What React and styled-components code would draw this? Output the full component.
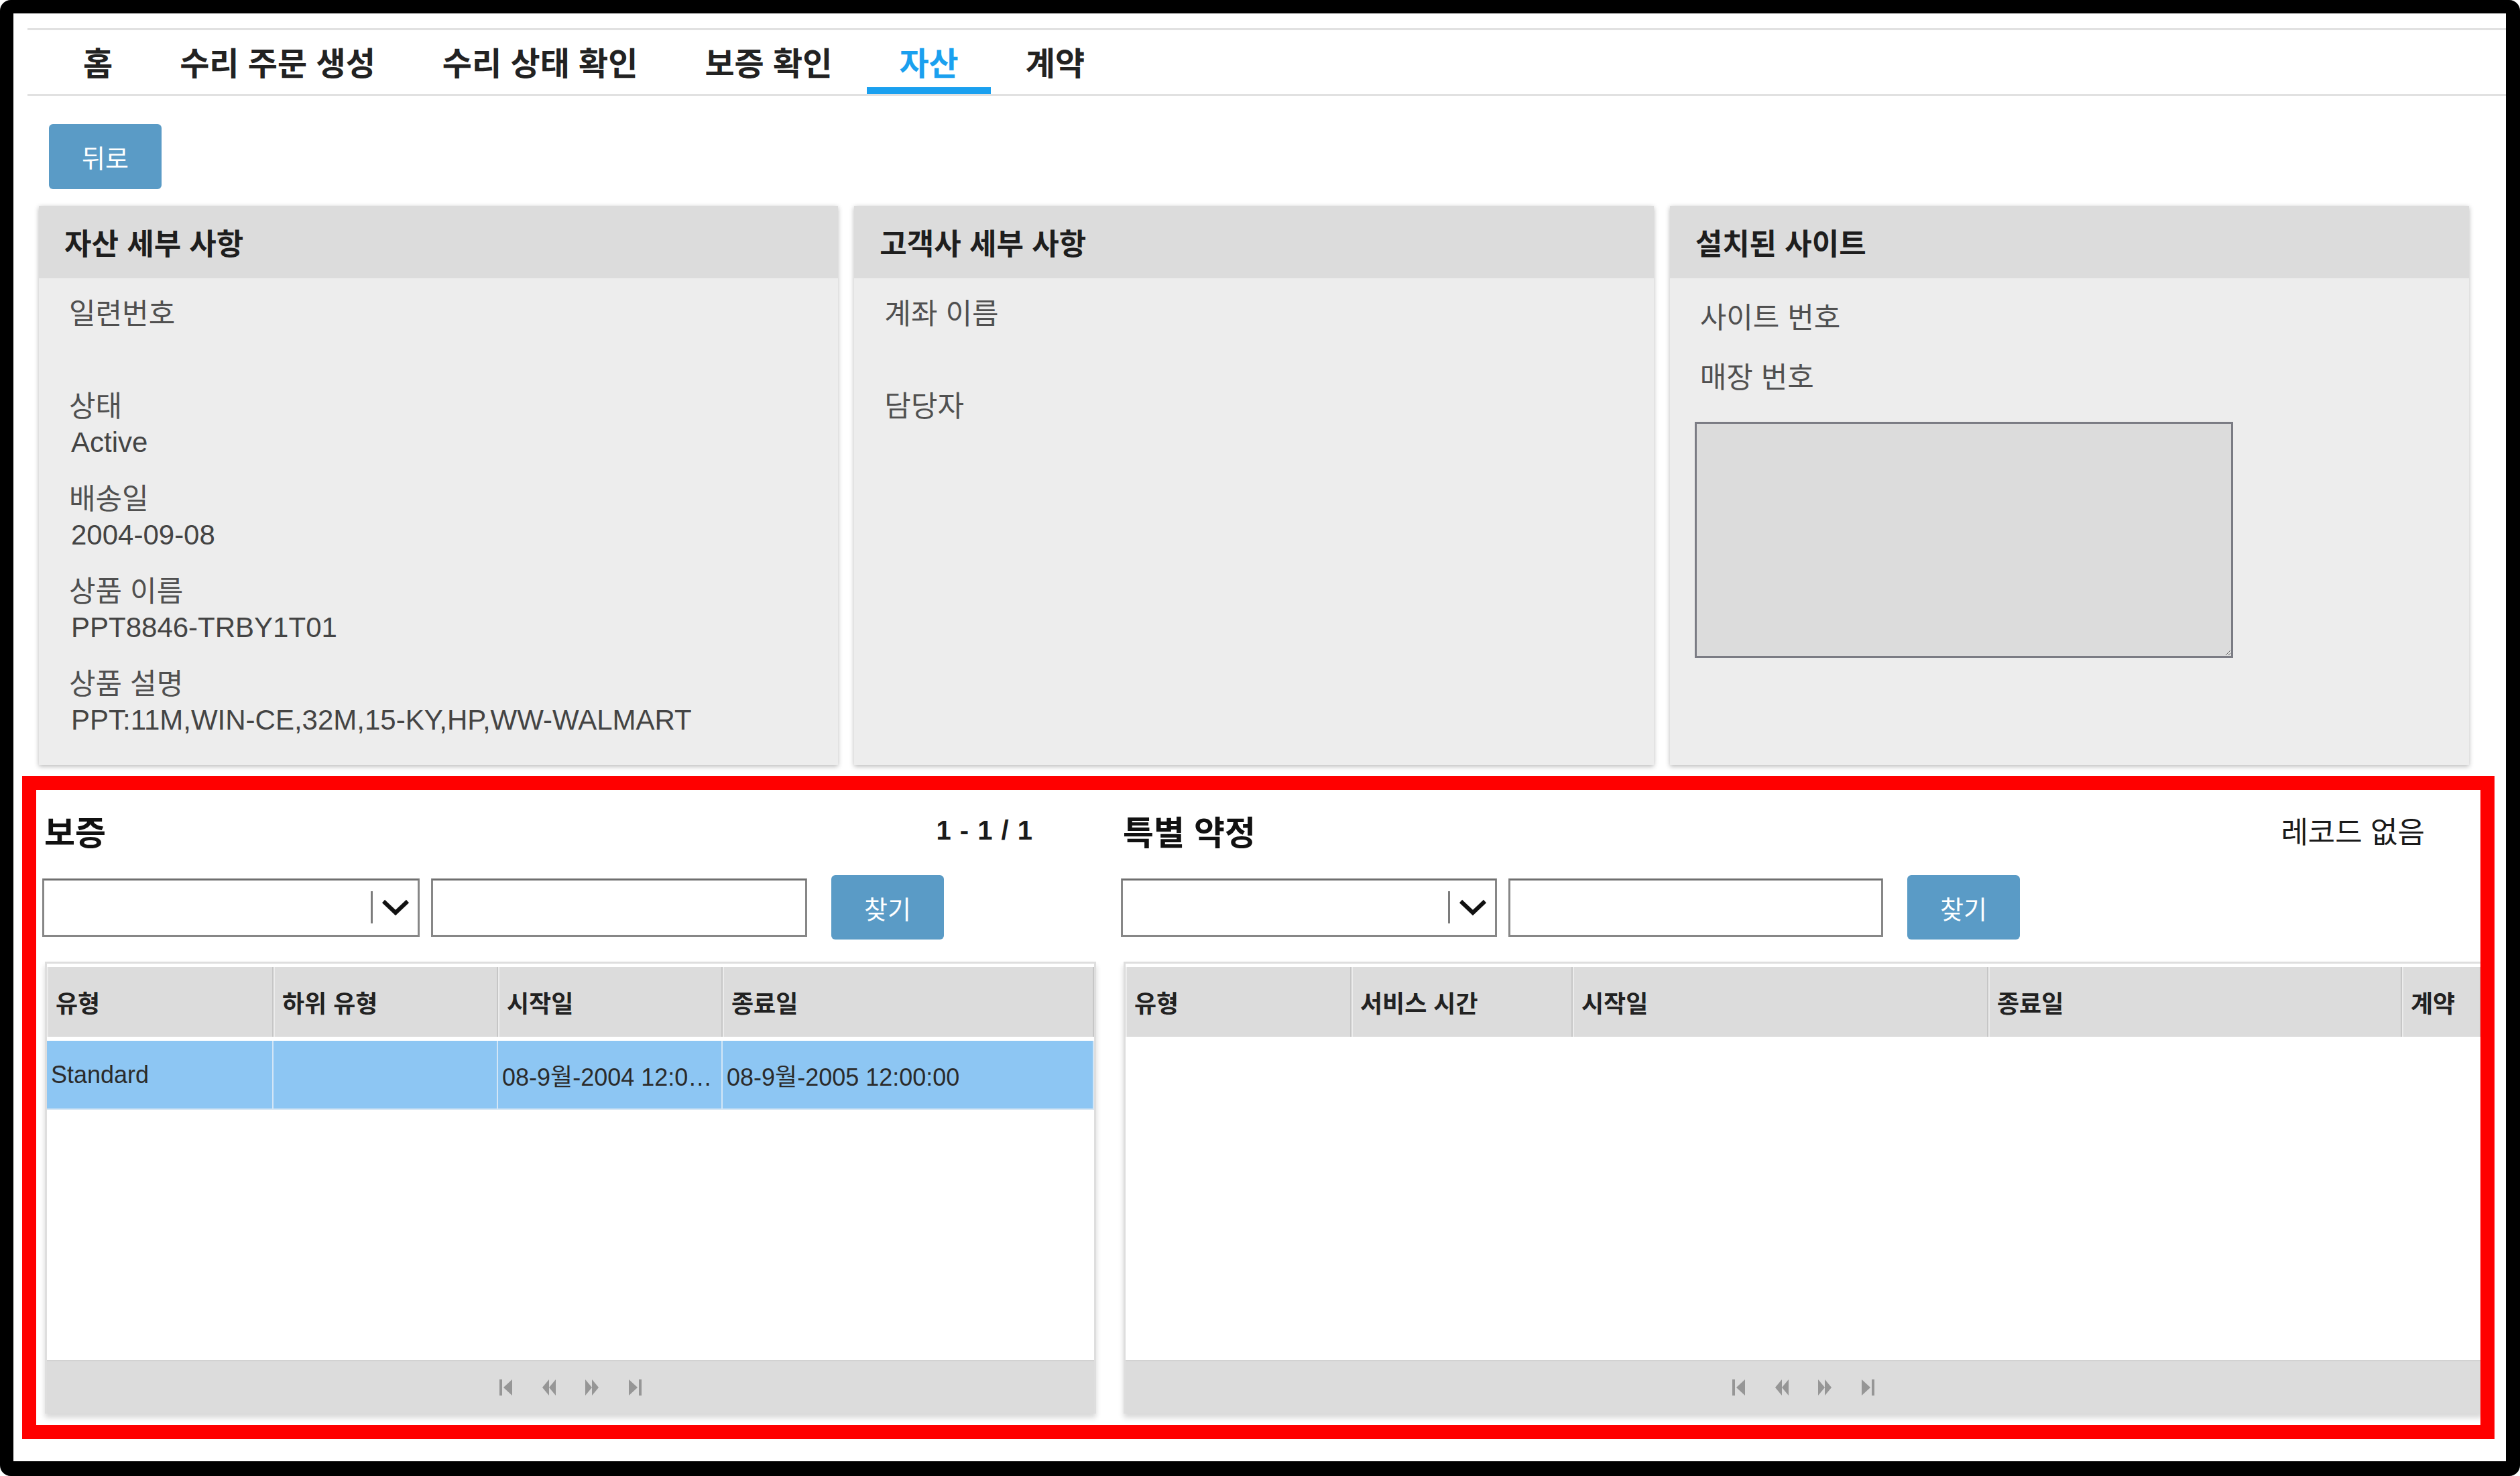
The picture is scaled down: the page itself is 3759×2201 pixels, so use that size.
import React from "react";
import styled, { createGlobalStyle } from "styled-components";

const GlobalStyle = createGlobalStyle`
  html, body {
    margin: 0;
    padding: 0;
    background: #fff;
  }
  body {
    font-family: "Liberation Sans", "Noto Sans CJK KR", sans-serif;
  }
  * {
    box-sizing: border-box;
  }
`;

const Frame = styled.div`
  position: relative;
  width: 3759px;
  height: 2201px;
  border: solid #000;
  border-width: 20px 21px 22px 20px;
  border-radius: 16px;
  background: #fff;
  overflow: hidden;
`;

const TabBar = styled.nav`
  display: flex;
  height: 101px;
  margin: 22px 0 0 21px;
  padding-left: 33px;
  border-top: 3px solid #e1e1e1;
  border-bottom: 3px solid #e1e1e1;
`;

const Tab = styled.div`
  position: relative;
  display: flex;
  align-items: center;
  padding: 0 50px 4px;
  font-size: 48px;
  font-weight: 700;
  color: ${(p) => (p.$active ? "#1aa0ef" : "#222")};
  &::after {
    content: "";
    display: ${(p) => (p.$active ? "block" : "none")};
    position: absolute;
    left: 2px;
    right: 2px;
    bottom: 0;
    height: 10px;
    background: #1aa0ef;
  }
`;

const Content = styled.main`
  padding: 0 55px 0 38px;
`;

const BlueButton = styled.button`
  display: flex;
  align-items: center;
  justify-content: center;
  width: ${(p) => p.$w || 168}px;
  height: ${(p) => p.$h || 96}px;
  padding: 0;
  border: 0;
  border-radius: 6px;
  background: #5a9bc6;
  color: #fff;
  font-family: inherit;
  font-size: 38px;
  flex-shrink: 0;
`;

const BackRow = styled.div`
  margin: 42px 0 0 15px;
`;

const CardRow = styled.section`
  display: grid;
  grid-template-columns: repeat(3, 1fr);
  gap: 24px;
  height: 834px;
  margin-top: 25px;
`;

const Card = styled.div`
  display: flex;
  flex-direction: column;
  background: #ededed;
  box-shadow: 0 2px 7px rgba(0, 0, 0, 0.28);
`;

const CardHeader = styled.div`
  display: flex;
  align-items: center;
  height: 108px;
  padding-left: 38px;
  background: #dcdcdc;
  color: #1e1e1e;
  font-size: 44px;
  font-weight: 700;
`;

const CardBody = styled.div`
  padding: ${(p) => p.$top || 26}px 0 0 45px;
`;

const Field = styled.div`
  margin-bottom: ${(p) => p.$gap ?? 30}px;
`;

const Label = styled.div`
  height: 54px;
  line-height: 54px;
  font-size: 43px;
  color: #505050;
`;

const Value = styled.div`
  height: 54px;
  line-height: 54px;
  padding-left: 3px;
  font-size: 42px;
  color: #444;
  white-space: nowrap;
`;

const SiteNotes = styled.textarea`
  display: block;
  width: 803px;
  height: 352px;
  margin-left: -8px;
  border: 3px solid #7b7c84;
  background: #dcdcdc;
  resize: both;
  outline: none;
`;

const Lower = styled.section`
  display: flex;
  gap: 37px;
  margin: 57px -21px 0 5px;
`;

const Panel = styled.div`
  display: flex;
  flex-direction: column;
  flex: ${(p) => (p.$width ? `0 0 ${p.$width}px` : "1")};
  min-width: 0;
`;

const TitleRow = styled.div`
  display: flex;
  align-items: center;
  justify-content: space-between;
  height: 80px;
  padding: 0 ${(p) => p.$right}px 0 3px;
`;

const PanelTitle = styled.h2`
  margin: 0;
  font-size: 50px;
  font-weight: 700;
  color: #111;
`;

const Counter = styled.span`
  font-size: ${(p) => (p.$bold ? 40 : 44)}px;
  font-weight: ${(p) => (p.$bold ? 700 : 400)};
  color: #1a1a1a;
  word-spacing: ${(p) => (p.$bold ? "2px" : "0")};
`;

const Toolbar = styled.div`
  display: flex;
  align-items: center;
  height: 96px;
  margin-top: 27px;
`;

const SelectBox = styled.div`
  display: flex;
  align-items: center;
  justify-content: flex-end;
  width: ${(p) => p.$w}px;
  height: 87px;
  padding-right: 11px;
  border: 3px solid #878787;
  border-top-color: #6f6f6f;
  background: #fff;
  flex-shrink: 0;
`;

const SelectDivider = styled.span`
  width: 3px;
  height: 48px;
  margin-right: 12px;
  background: #7c7c7c;
`;

const SearchInput = styled.input`
  width: ${(p) => p.$w}px;
  height: 87px;
  margin: 0 36px 0 17px;
  border: 3px solid #878787;
  border-top-color: #6f6f6f;
  outline: none;
  flex-shrink: 0;
`;

const Grid = styled.div`
  display: flex;
  flex-direction: column;
  height: 674px;
  margin: 33px 0 0 4px;
  border: 3px solid #dedede;
  border-bottom: 0;
  background: #fff;
  box-shadow: 0 6px 8px rgba(0, 0, 0, 0.16);
`;

const GridRow = styled.div`
  display: grid;
  grid-template-columns: ${(p) => p.$cols};
  height: ${(p) => p.$h}px;
  margin-top: ${(p) => p.$mt || 0}px;
  background: ${(p) => p.$bg};
  border-bottom: ${(p) => (p.$line ? "2px solid #d8e7f3" : "0")};
`;

const HeadCell = styled.div`
  display: flex;
  align-items: center;
  padding-left: 11px;
  border-right: 2px solid #c6c6c6;
  border-left: 2px solid #ececec;
  font-size: 36px;
  font-weight: 700;
  color: #222;
  white-space: nowrap;
  overflow: hidden;
`;

const DataCell = styled.div`
  display: flex;
  align-items: center;
  padding: 0 4px 0 6px;
  border-right: 2px solid #d3e6f6;
  font-size: 36px;
  color: #2b2b2b;
  min-width: 0;
  span {
    white-space: nowrap;
    overflow: hidden;
    text-overflow: ellipsis;
  }
`;

const GridBody = styled.div`
  flex: 1;
`;

const Pager = styled.div`
  display: flex;
  align-items: center;
  justify-content: center;
  gap: 42px;
  height: 80px;
  background: #dcdcdc;
  border-top: 2px solid #d2d2d2;
  color: #8a8a8a;
`;

const Highlight = styled.div`
  position: absolute;
  top: 1137px;
  left: 13px;
  width: 3688px;
  height: 989px;
  border: 21px solid #ff0000;
  pointer-events: none;
`;

const Chevron = () => (
  <svg width="44" height="28" viewBox="0 0 44 28">
    <path d="M4 5 L22 22 L40 5" fill="none" stroke="#111" strokeWidth="6" />
  </svg>
);

// first / prev / next / last arrows of the grid pager
const PagerIcon = ({ kind }) => {
  const shapes = {
    first: (
      <>
        <rect x="1" y="0" width="4" height="24" />
        <polygon points="20,0 7,12 20,24" />
      </>
    ),
    prev: (
      <>
        <polygon points="11,0 1,12 11,24" />
        <polygon points="21,0 11,12 21,24" />
      </>
    ),
    next: (
      <>
        <polygon points="1,0 11,12 1,24" />
        <polygon points="11,0 21,12 11,24" />
      </>
    ),
    last: (
      <>
        <polygon points="2,0 15,12 2,24" />
        <rect x="17" y="0" width="4" height="24" />
      </>
    ),
  };
  return (
    <svg width="22" height="24" viewBox="0 0 22 24" fill="currentColor" opacity="0.85">
      {shapes[kind]}
    </svg>
  );
};

const tabs = ["홈", "수리 주문 생성", "수리 상태 확인", "보증 확인", "자산", "계약"];

const assetFields = [
  { label: "일련번호", value: "" },
  { label: "상태", value: "Active" },
  { label: "배송일", value: "2004-09-08" },
  { label: "상품 이름", value: "PPT8846-TRBY1T01" },
  { label: "상품 설명", value: "PPT:11M,WIN-CE,32M,15-KY,HP,WW-WALMART" },
];

const customerFields = [
  { label: "계좌 이름", value: "" },
  { label: "담당자", value: "" },
];

const warranty = {
  title: "보증",
  count: "1 - 1 / 1",
  cols: "338px 335px 335px 1fr",
  headers: ["유형", "하위 유형", "시작일", "종료일"],
  rows: [["Standard", "", "08-9월-2004 12:00:00", "08-9월-2005 12:00:00"]],
};

const agreements = {
  title: "특별 약정",
  count: "레코드 없음",
  cols: "337px 330px 620px 617px 1fr",
  headers: ["유형", "서비스 시간", "시작일", "종료일", "계약"],
  rows: [],
};

const DataPanel = ({ data, width, selectW, inputW, right, boldCount }) => (
  <Panel $width={width}>
    <TitleRow $right={right}>
      <PanelTitle>{data.title}</PanelTitle>
      <Counter $bold={boldCount}>{data.count}</Counter>
    </TitleRow>
    <Toolbar>
      <SelectBox $w={selectW}>
        <SelectDivider />
        <Chevron />
      </SelectBox>
      <SearchInput $w={inputW} />
      <BlueButton>찾기</BlueButton>
    </Toolbar>
    <Grid>
      <GridRow $cols={data.cols} $h={104} $mt={5} $bg="#dcdcdc">
        {data.headers.map((h) => (
          <HeadCell key={h}>{h}</HeadCell>
        ))}
      </GridRow>
      <GridBody>
        {data.rows.map((row, i) => (
          <GridRow key={i} $cols={data.cols} $h={103} $mt={6} $bg="#8dc6f3" $line>
            {row.map((cell, j) => (
              <DataCell key={j}>
                <span>{cell}</span>
              </DataCell>
            ))}
          </GridRow>
        ))}
      </GridBody>
      <Pager>
        <PagerIcon kind="first" />
        <PagerIcon kind="prev" />
        <PagerIcon kind="next" />
        <PagerIcon kind="last" />
      </Pager>
    </Grid>
  </Panel>
);

const FieldList = ({ fields }) =>
  fields.map((f) => (
    <Field key={f.label}>
      <Label>{f.label}</Label>
      <Value>{f.value}</Value>
    </Field>
  ));

const App = () => {
  return (
    <Frame>
      <GlobalStyle />
      <TabBar>
        {tabs.map((t) => (
          <Tab key={t} $active={t === "자산"}>
            {t}
          </Tab>
        ))}
      </TabBar>
      <Content>
        <BackRow>
          <BlueButton $h={97}>뒤로</BlueButton>
        </BackRow>
        <CardRow>
          <Card>
            <CardHeader>자산 세부 사항</CardHeader>
            <CardBody>
              <FieldList fields={assetFields} />
            </CardBody>
          </Card>
          <Card>
            <CardHeader>고객사 세부 사항</CardHeader>
            <CardBody>
              <FieldList fields={customerFields} />
            </CardBody>
          </Card>
          <Card>
            <CardHeader>설치된 사이트</CardHeader>
            <CardBody $top={32}>
              <Field $gap={35}>
                <Label>사이트 번호</Label>
              </Field>
              <Field $gap={39}>
                <Label>매장 번호</Label>
              </Field>
              <SiteNotes readOnly />
            </CardBody>
          </Card>
        </CardRow>
        <Lower>
          <DataPanel data={warranty} width={1572} selectW={563} inputW={561} right={95} boldCount />
          <DataPanel data={agreements} selectW={561} inputW={559} right={87} />
        </Lower>
      </Content>
      <Highlight />
    </Frame>
  );
};

export default App;
